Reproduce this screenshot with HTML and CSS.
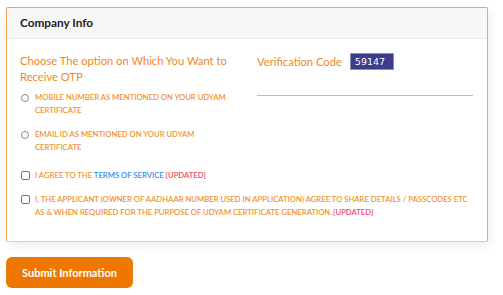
FILE: index.html
```html
<!DOCTYPE html>
<html>
<head>
<meta charset="utf-8">
<link rel="stylesheet" href="styles.css">
</head>
<body>
<div class="page">
  <div class="card">
    <div class="card-header">Company Info</div>
    <div class="card-body">
      <div class="row">
        <div class="col">
          <div class="heading">Choose The option on Which You Want to Receive OTP</div>
          <label class="opt radio-opt"><span class="radio"></span><span class="opt-text">MOBILE NUMBER AS MENTIONED ON YOUR UDYAM CERTIFICATE</span></label>
          <label class="opt radio-opt"><span class="radio"></span><span class="opt-text">EMAIL ID AS MENTIONED ON YOUR UDYAM CERTIFICATE</span></label>
        </div>
        <div class="col col-right">
          <div class="verify">
            <span class="heading">Verification Code</span>
            <span class="code">59147</span>
          </div>
          <div class="code-input"></div>
        </div>
      </div>
      <label class="opt check-opt first-check"><span class="check"></span><span class="opt-text">I AGREE TO THE <span class="link">TERMS OF SERVICE</span> <span class="upd">[UPDATED]</span></span></label>
      <label class="opt check-opt"><span class="check"></span><span class="opt-text">I, THE APPLICANT (OWNER OF AADHAAR NUMBER USED IN APPLICATION) AGREE TO SHARE DETAILS / PASSCODES ETC AS &amp; WHEN REQUIRED FOR THE PURPOSE OF UDYAM CERTIFICATE GENERATION.<span class="upd upd-tight">[UPDATED]</span></span></label>
    </div>
  </div>
  <button class="submit">Submit Information</button>
</div>
</body>
</html>
```

FILE: styles.css
```css
* { box-sizing: border-box; }
html, body { margin: 0; padding: 0; background: #fff; }
body { font-family: Lato, "Open Sans", sans-serif; }
.page { padding: 7px 0 0 6px; width: 494px; }
.card {
  width: 482px;
  border: 1px solid #f3a257;
  border-bottom-color: #fbc894;
  border-radius: 2px;
  background: #fff;
  box-shadow: 2px 4px 10px rgba(0,0,0,0.07);
}
.card-header {
  background: #f7f7f7;
  border-bottom: 1px solid #eeeeee;
  height: 31px;
  padding: 0 13px;
  font-size: 11.8px;
  font-weight: 700;
  color: #222;
  line-height: 30px;
}
.card-body { padding: 14px 13px 22px 13px; }
.row { display: grid; grid-template-columns: 237px 1fr; }
.heading { color: #f0882a; font-size: 11.2px; line-height: 15.5px; }
.col .heading { display: block; width: 215px; }
.verify { display: flex; align-items: center; margin-top: 0; }
.verify .heading { display: inline; width: auto; }
.code {
  margin-left: 8px;
  background: #3d3d8c;
  border: 1px solid #8a8ac8;
  color: #fff;
  font-family: "DejaVu Sans", sans-serif;
  font-size: 9.5px;
  line-height: 15px;
  padding: 0 4px;
  width: 44px;
}
.code-input { margin-top: 25px; width: 216px; border-bottom: 1px solid #f7b06a; }
.opt {
  display: flex;
  align-items: flex-start;
  font-size: 7.7px;
  font-weight: 600;
  color: #f0922e;
  line-height: 13px;
}
.radio-opt { margin-top: 7px; }
.radio-opt + .radio-opt { margin-top: 11px; }
.radio {
  flex: none;
  width: 8px; height: 8px;
  border: 1px solid #8a8a8a;
  border-radius: 50%;
  margin: 3px 6px 0 1px;
}
.check {
  flex: none;
  width: 9px; height: 9px;
  border: 1px solid #777;
  border-radius: 2px;
  margin: 2px 5px 0 1px;
}
.first-check { margin-top: 15px; }
.check-opt + .check-opt { margin-top: 11px; }
.opt-text { width: 440px; }
.radio-opt .opt-text { width: 205px; }
.link { color: #2f8ef0; }
.upd { color: #ee4a6a; }
.upd-tight { margin-left: 1px; }
.submit {
  display: block;
  margin-top: 15px;
  width: 127px;
  height: 31px;
  border: none;
  border-radius: 6px;
  background: #ee7700;
  color: #fff;
  font-family: Lato, "Open Sans", sans-serif;
  font-weight: 700;
  font-size: 11px;
  padding: 0;
}
```
